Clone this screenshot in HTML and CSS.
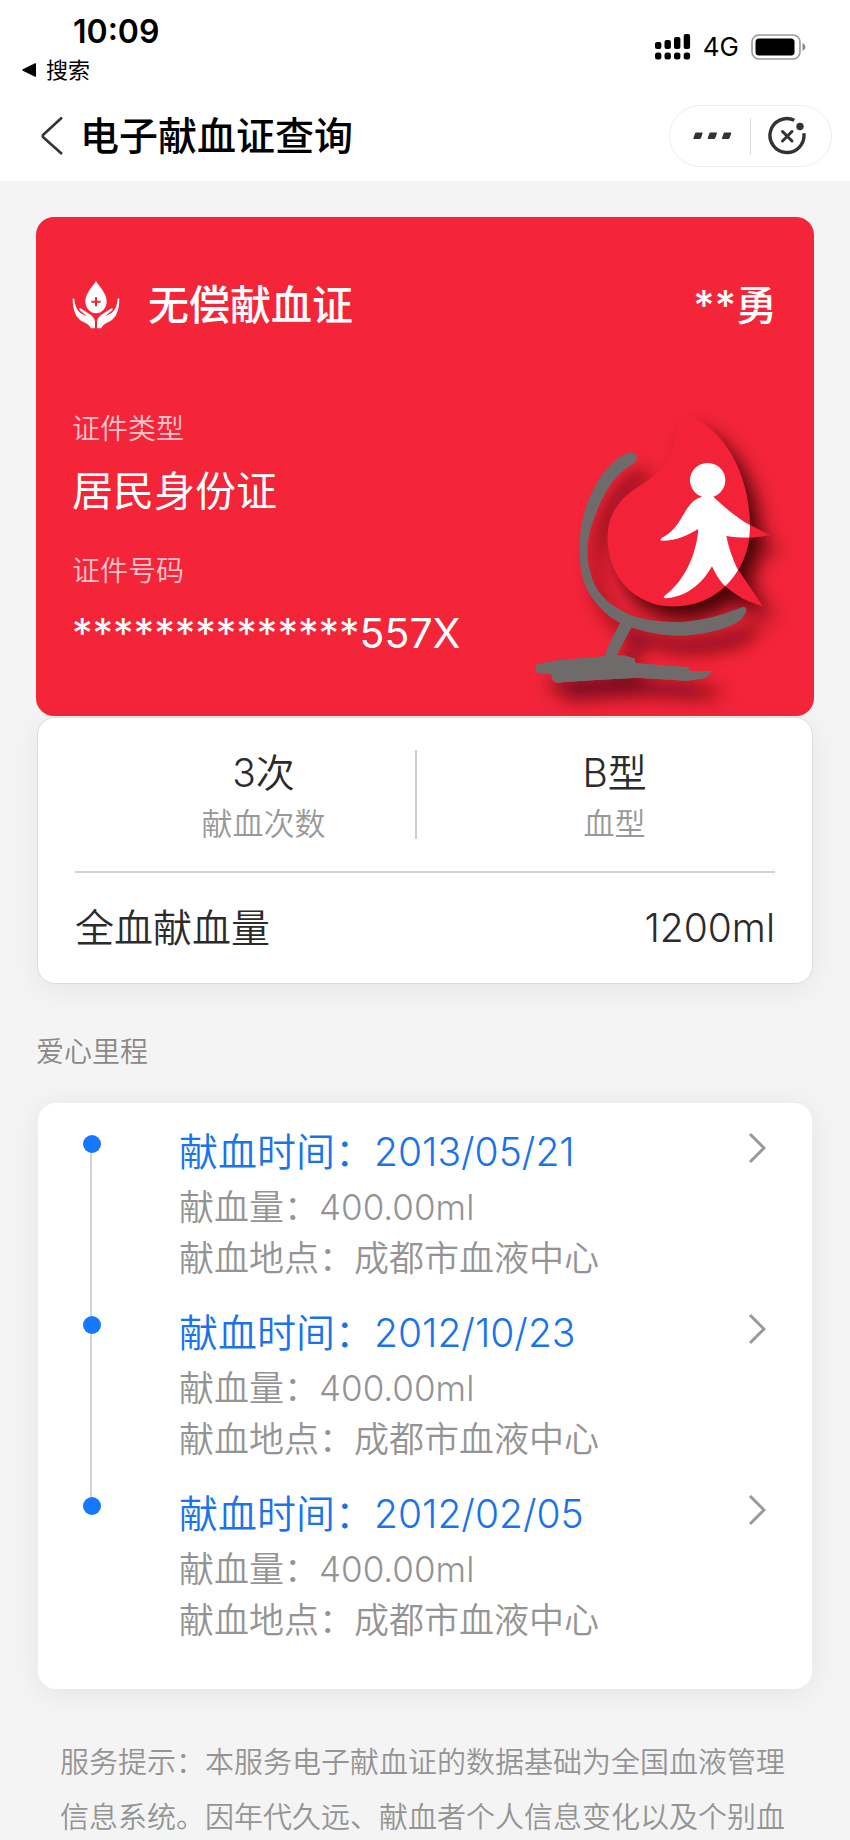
FILE: index.html
```html
<!DOCTYPE html>
<html lang="zh-CN">
<head>
<meta charset="utf-8">
<meta name="viewport" content="width=device-width, initial-scale=1">
<title>电子献血证查询</title>
<link rel="stylesheet" href="styles.css">
</head>
<body>
<div class="app">
  <header class="top">
    <div class="status">
      <div class="status-left">
        <div class="clock">10:09</div>
        <a class="back-app" href="#">
          <svg width="15" height="14" viewBox="0 0 15 14" aria-hidden="true"><path d="M14 .8v12.4q0 .8-1 .5L.8 7.8q-1-.8 0-1.500L13 .3q1-.3 1 .5z"/></svg>
          搜索
        </a>
      </div>
      <div class="status-right">
        <svg width="36" height="26" viewBox="0 0 36 26" aria-hidden="true">
          <rect x="0" y="8" width="6.400" height="7" rx="2"/><rect x="9.500" y="6" width="6.400" height="9" rx="2"/><rect x="19" y="3" width="6.400" height="12" rx="2"/><rect x="28.700" y="0" width="6.400" height="15" rx="2"/>
          <rect x="0" y="18.500" width="6.400" height="7" rx="2.500"/><rect x="9.500" y="18.500" width="6.400" height="7" rx="2.500"/><rect x="19" y="18.500" width="6.400" height="7" rx="2.500"/><rect x="28.700" y="18.500" width="6.400" height="7" rx="2.500"/>
        </svg>
        <span class="network">4G</span>
        <svg width="55" height="26" viewBox="0 0 55 26" aria-hidden="true">
          <rect x="1" y="1" width="48" height="24" rx="7" fill="none" stroke="#999" stroke-width="1.600"/>
          <rect x="4.500" y="4.500" width="39" height="17" rx="3.500"/>
          <path d="M51.500 9q3 1.500 3 4t-3 4z" fill="#888"/>
        </svg>
      </div>
    </div>
    <nav class="nav">
      <button class="back" type="button" aria-label="返回">
        <svg width="24" height="40" viewBox="0 0 24 40"><path d="M22 1.500 3.500 18.500q-1.500 1.500 0 3L22 38" fill="none" stroke="#333" stroke-width="2.600"/></svg>
      </button>
      <h1 class="nav-title">电子献血证查询</h1>
      <div class="capsule">
        <button class="capsule-btn" type="button" aria-label="更多">
          <svg width="40" height="8" viewBox="0 0 40 8" fill="#333"><path d="M3 .5h6q1 0 .6 1L8 6q-.4 1-1.500 1H1q-1 0-.6-1L2 1.500Q2.300.5 3 .5zM17.300.5h6q1 0 .6 1L22.300 6q-.4 1-1.500 1h-5.500q-1 0-.6-1l1.600-4.500q.3-1 1-1zM31.600.5h6q1 0 .6 1L36.600 6q-.4 1-1.500 1h-5.500q-1 0-.6-1l1.600-4.500q.3-1 1-1z"/></svg>
        </button>
        <button class="capsule-btn capsule-close" type="button" aria-label="关闭">
          <svg width="40" height="40" viewBox="0 0 40 40" fill="none" stroke="#333"><path d="M27.300 4.200A17 17 0 1 0 36.800 17.200" stroke-width="3.400"/><path d="M15.500 15.500 25 25M25 15.500 15.500 25" stroke-width="3" stroke-linecap="round"/><circle cx="33" cy="10.500" r="3.700" fill="#333" stroke="none"/></svg>
        </button>
      </div>
    </nav>
  </header>

  <main class="content">
    <section class="cert">
      <div class="cert-head">
        <svg width="48" height="48" viewBox="0 0 144 144" aria-hidden="true">
          <path d="M72 0C82 17 104 37 104 61A32 36 0 0 1 40 61C40 37 62 17 72 0z" fill="#fff"/>
          <path d="M72 48v28M58 62h28" stroke="#f42439" stroke-width="6"/>
          <g id="hand" fill="#fff">
            <path d="M2 54Q3 50 7 54C9 76 16 92 30 98L43 106C39 98 27 92 22 86Q21 79 28 83L51 98Q68 108 69 123V142H56Q53 130 33 122C10 112 2 84 2 54z"/>
          </g>
          <use href="#hand" transform="matrix(-1 0 0 1 144 0)"/>
        </svg>
        <h2 class="cert-title">无偿献血证</h2>
        <span>**勇</span>
      </div>
      <div class="cert-body">
        <dl class="fields">
          <dt>证件类型</dt><dd>居民身份证</dd>
          <dt>证件号码</dt><dd>**************557X</dd>
        </dl>
        <svg class="cert-art" width="254" height="294" viewBox="90 40 762 882" aria-hidden="true">
          <defs>
            <filter id="shade" x="-30%" y="-30%" width="170%" height="170%"><feDropShadow dx="32" dy="42" stdDeviation="30" flood-color="#300006" flood-opacity=".9"/></filter>
            <filter id="soft" x="-30%" y="-30%" width="170%" height="170%"><feDropShadow dx="38" dy="52" stdDeviation="27" flood-color="#4a000a" flood-opacity=".75"/></filter>
            <clipPath id="dropclip"><path d="M524 50C670 85 750 220 750 385C746 520 650 620 520 620C400 620 323 525 323 415C323 350 352 302 410 265C475 225 520 190 526 110Q530 75 524 50z"/></clipPath>
            <path id="person" d="M606 291A53 52 0 1 1 640 291C675 325 715 358 750 376L808 406C775 414 730 417 679 409C686 445 697 475 711 506L787 618C745 608 710 588 671 555C653 535 645 518 636 500C605 555 555 594 494 596Q488 594 494 588C548 548 588 475 595 388C560 408 530 424 483 423Q478 418 490 412C550 382 550 306 606 291z"/>
            <path id="stand" d="M384 160Q402 155 409 169Q413 183 398 193C350 220 320 260 290 335C258 410 253 470 274 530C290 590 340 625 400 650C500 680 610 670 722 624Q740 618 739 633C725 670 690 680 640 694C550 716 480 710 394 683L348 768L377 768L404 777L406 791L565 803L570 814H637L615 835L560 843L480 838L410 834L295 840L190 847Q150 855 156 824L115 820Q98 804 112 793L180 781L316 770C325 730 345 700 362 669C320 650 285 610 265 575C240 530 235 470 243 385C260 290 310 190 384 160z"/>
          </defs>
          <use href="#stand" fill="#6f6b6b" filter="url(#soft)"/>
          <g filter="url(#shade)" fill="#f42439">
            <path d="M565 50C670 85 750 220 750 385C746 520 650 620 520 620C400 620 323 525 323 415C323 350 352 302 410 265C475 225 520 190 526 110Q545 45 565 50z"/>
            <use href="#person"/>
          </g>
          <use href="#stand" fill="#6f6b6b"/>
          <use href="#person" fill="#fff" clip-path="url(#dropclip)"/>
        </svg>
      </div>
    </section>

    <section class="summary">
      <div class="stats">
        <div class="stat"><strong>3次</strong><span>献血次数</span></div>
        <div class="stat"><strong>B型</strong><span>血型</span></div>
      </div>
      <div class="total"><span>全血献血量</span><span>1200ml</span></div>
    </section>

    <h2 class="section-title">爱心里程</h2>
    <ol class="timeline">
      <li><a class="entry" href="#">
        <span class="dot"></span>
        <span class="entry-text"><span class="entry-time">献血时间：2013/05/21</span><span>献血量：400.00ml</span><span>献血地点：成都市血液中心</span></span>
        <svg class="chevron" width="18" height="32" viewBox="0 0 18 32" aria-hidden="true"><path d="M2 2 16 16 2 30"/></svg>
      </a></li>
      <li><a class="entry" href="#">
        <span class="dot"></span>
        <span class="entry-text"><span class="entry-time">献血时间：2012/10/23</span><span>献血量：400.00ml</span><span>献血地点：成都市血液中心</span></span>
        <svg class="chevron" width="18" height="32" viewBox="0 0 18 32" aria-hidden="true"><path d="M2 2 16 16 2 30"/></svg>
      </a></li>
      <li><a class="entry" href="#">
        <span class="dot"></span>
        <span class="entry-text"><span class="entry-time">献血时间：2012/02/05</span><span>献血量：400.00ml</span><span>献血地点：成都市血液中心</span></span>
        <svg class="chevron" width="18" height="32" viewBox="0 0 18 32" aria-hidden="true"><path d="M2 2 16 16 2 30"/></svg>
      </a></li>
    </ol>
    <p class="notice">服务提示：本服务电子献血证的数据基础为全国血液管理信息系统。因年代久远、献血者个人信息变化以及个别血</p>
  </main>
</div>
</body>
</html>
```
FILE: styles.css
```css
* { box-sizing: border-box; }
body {
  margin: 0;
  background: #f4f4f4;
  color: #2b2b2b;
  font-family: Inter, "Noto Sans CJK SC", sans-serif;
  font-weight: 350;
}
h1, h2, p, dl, dd, ol { margin: 0; padding: 0; }
ol { list-style: none; }
a { color: inherit; text-decoration: none; }
button { border: 0; padding: 0; background: none; }
svg { display: block; flex: none; }

.app { height: 100vh; display: flex; flex-direction: column; }
.top { flex: none; background: #fff; padding: 12px 18px 14px 22px; }
.status { display: flex; justify-content: space-between; color: #000; }
.clock { padding-left: 51px; font-size: 32px; line-height: 40px; font-weight: 600; }
.back-app { display: flex; align-items: center; gap: 9px; font-size: 22px; line-height: 36px; font-weight: 400; }
.status-right { display: flex; align-items: center; align-self: flex-start; gap: 12px; padding: 17px 26px 0 0; }
.network { font-size: 26px; line-height: 36px; font-weight: 400; }
.nav { display: flex; align-items: center; margin-top: 17px; padding-left: 18px; }
.nav-title { flex: 1; padding-left: 16px; font-size: 39px; line-height: 60px; font-weight: 500; color: #000; }
.capsule { display: flex; align-items: center; width: 163px; height: 62px; border: 1px solid #ececec; border-radius: 31px; }
.capsule-btn { display: flex; flex: 1; justify-content: center; align-items: center; height: 37px; }
.capsule-btn:first-child { padding-left: 7px; }
.capsule-close { border-left: 1px solid #ddd; padding-right: 8px; }

.content { flex: 1; overflow-y: auto; scrollbar-width: none; padding: 36px 36px 0; }

.cert { padding: 58px 30px 9px 36px; border-radius: 18px; background: #f42439; color: #fff; }
.cert-head { display: flex; align-items: center; padding-right: 7px; line-height: 60px; font-weight: 500; font-size: 41px; }
.cert-title { flex: 1; padding-left: 28px; font-size: 41px; font-weight: 500; }
.cert-body { display: flex; justify-content: space-between; padding-top: 73px; }
.fields { padding-top: 1px; }
.fields dt { font-size: 28px; line-height: 40px; color: #ffc4cb; }
.fields dd { padding: 12px 0 30px; font-size: 41px; line-height: 60px; font-weight: 400; }
.fields dd:last-child { padding-bottom: 0; }
.cert-art { margin-top: 5px; overflow: visible; }

.summary {
  margin: 1px 1px 0;
  border: 1px solid #dcdcdc;
  border-radius: 18px;
  background: #fff;
  box-shadow: 0 6px 30px rgba(0, 0, 0, .06);
}
.stats { display: grid; grid-template-columns: 7fr 9fr; padding: 32px 0 27px 72px; }
.stat { display: flex; flex-direction: column; align-items: center; }
.stat:first-child { background: linear-gradient(#ccc, #ccc) right top / 2px 89px no-repeat; }
.stat strong { font-size: 39px; line-height: 46px; font-weight: 350; }
.stat span { padding-top: 8px; font-size: 31px; line-height: 40px; color: #999; }
.total { display: flex; justify-content: space-between; margin: 0 37px; padding: 25px 0; border-top: 2px solid #d4d4d4; font-size: 39px; line-height: 60px; }

.section-title { padding: 48px 0 31px; font-size: 28px; line-height: 40px; font-weight: 350; color: #888; }
.timeline { margin: 0 2px; padding: 19px 46px 43px 45px; border-radius: 18px; background: #fff; box-shadow: 0 4px 30px rgba(0, 0, 0, .07); }
.timeline li { position: relative; padding-bottom: 19px; }
.timeline li:last-child { padding-bottom: 0; }
.timeline li:not(:last-child)::before { content: ""; position: absolute; left: 7px; top: 22px; width: 2px; height: 100%; background: #d2d2d2; }
.entry { display: flex; align-items: flex-start; }
.dot { position: relative; flex: none; width: 18px; height: 18px; margin-top: 13px; border-radius: 50%; background: #1677ff; z-index: 1; }
.entry-text { display: flex; flex: 1; flex-direction: column; padding-left: 78px; font-size: 35px; line-height: 51px; color: #949494; }
.entry-time { font-size: 39px; line-height: 60px; color: #1a73e8; }
.chevron { margin-top: 10px; fill: none; stroke: #999; stroke-width: 3; }

.notice { padding: 46px 22px 0 24px; font-size: 29px; line-height: 55px; color: #949494; }
```
